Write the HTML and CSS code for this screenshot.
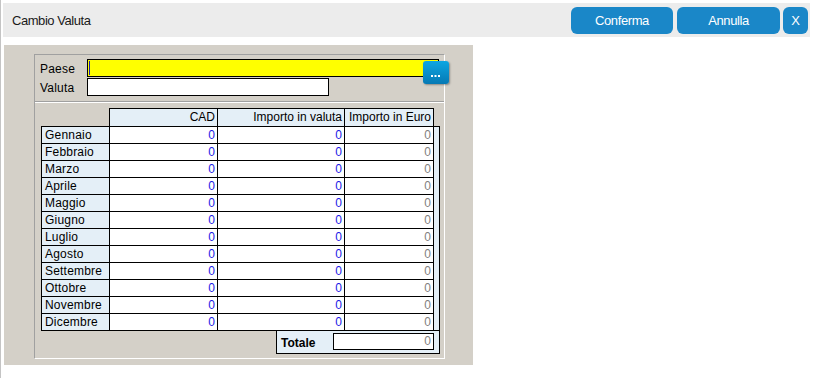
FILE: index.html
```html
<!DOCTYPE html>
<html lang="it">
<head>
<meta charset="utf-8">
<title>Cambio Valuta</title>
<link rel="stylesheet" href="styles.css">
</head>
<body>
<div class="dialog">
  <div class="topbar">
    <div class="title">Cambio Valuta</div>
    <div class="actions">
      <button class="btn btn-confirm">Conferma</button>
      <button class="btn btn-cancel">Annulla</button>
      <button class="btn btn-close">X</button>
    </div>
  </div>

  <div class="panel">
    <div class="groupbox">
      <div class="form-section">
        <div class="form-row">
          <span class="form-label">Paese</span>
          <span class="field field-paese"><span class="caret"></span></span>
        </div>
        <div class="form-row">
          <span class="form-label">Valuta</span>
          <span class="field field-valuta"></span>
        </div>
        <div class="lookup-btn">
          <svg width="26" height="23" viewBox="0 0 26 23">
            <rect x="8" y="14" width="2" height="2" fill="#ffffff"/>
            <rect x="11.5" y="14" width="2" height="2" fill="#ffffff"/>
            <rect x="15" y="14" width="2" height="2" fill="#ffffff"/>
          </svg>
        </div>
      </div>
      <div class="separator"></div>
      <div class="table-section">
        <div class="grid-head">
          <div class="head-spacer"></div>
          <div class="hcell hc-cad">CAD</div>
          <div class="hcell hc-val">Importo in valuta</div>
          <div class="hcell hc-eur">Importo in Euro</div>
        </div>
        <div class="grid-body">
          <div class="rows">
            <div class="row"><div class="c c-month">Gennaio</div><div class="c c-cad">0</div><div class="c c-val">0</div><div class="c c-eur">0</div></div>
            <div class="row"><div class="c c-month">Febbraio</div><div class="c c-cad">0</div><div class="c c-val">0</div><div class="c c-eur">0</div></div>
            <div class="row"><div class="c c-month">Marzo</div><div class="c c-cad">0</div><div class="c c-val">0</div><div class="c c-eur">0</div></div>
            <div class="row"><div class="c c-month">Aprile</div><div class="c c-cad">0</div><div class="c c-val">0</div><div class="c c-eur">0</div></div>
            <div class="row"><div class="c c-month">Maggio</div><div class="c c-cad">0</div><div class="c c-val">0</div><div class="c c-eur">0</div></div>
            <div class="row"><div class="c c-month">Giugno</div><div class="c c-cad">0</div><div class="c c-val">0</div><div class="c c-eur">0</div></div>
            <div class="row"><div class="c c-month">Luglio</div><div class="c c-cad">0</div><div class="c c-val">0</div><div class="c c-eur">0</div></div>
            <div class="row"><div class="c c-month">Agosto</div><div class="c c-cad">0</div><div class="c c-val">0</div><div class="c c-eur">0</div></div>
            <div class="row"><div class="c c-month">Settembre</div><div class="c c-cad">0</div><div class="c c-val">0</div><div class="c c-eur">0</div></div>
            <div class="row"><div class="c c-month">Ottobre</div><div class="c c-cad">0</div><div class="c c-val">0</div><div class="c c-eur">0</div></div>
            <div class="row"><div class="c c-month">Novembre</div><div class="c c-cad">0</div><div class="c c-val">0</div><div class="c c-eur">0</div></div>
            <div class="row"><div class="c c-month">Dicembre</div><div class="c c-cad">0</div><div class="c c-val">0</div><div class="c c-eur">0</div></div>
          </div>
          <div class="strip"></div>
        </div>
        <div class="total">
          <span class="total-label">Totale</span>
          <span class="total-field">0</span>
        </div>
      </div>
    </div>
  </div>
</div>
</body>
</html>
```

FILE: styles.css
```css
html, body {
  margin: 0;
  padding: 0;
  background: #ffffff;
}

body {
  font-family: "Liberation Sans", Arial, sans-serif;
  font-size: 12px;
  color: #000000;
}

.dialog {
  box-sizing: border-box;
  width: 814px;
  height: 378px;
  border-left: 1px solid #c4c4c4;
  padding-top: 3px;
}

.topbar {
  box-sizing: border-box;
  margin-left: 2px;
  width: 807px;
  height: 34px;
  background: #ececec;
  display: flex;
  align-items: center;
  padding-left: 9px;
  padding-right: 2px;
}

.title {
  font-size: 13px;
  letter-spacing: -0.45px;
  color: #1a1a1a;
  padding-top: 1px;
}

.actions {
  margin-left: auto;
  align-self: flex-start;
  margin-top: 4px;
  display: flex;
}

.btn {
  box-sizing: border-box;
  height: 27px;
  border: none;
  border-radius: 6px;
  background: #1a87c8;
  color: #ffffff;
  font-family: "Liberation Sans", Arial, sans-serif;
  font-size: 13px;
  letter-spacing: -0.4px;
  padding: 0;
  margin: 0;
}

.btn-confirm { width: 102px; }
.btn-cancel { width: 103px; margin-left: 4px; }
.btn-close { width: 25px; margin-left: 3px; }

.panel {
  box-sizing: border-box;
  margin-top: 8px;
  margin-left: 3px;
  width: 469px;
  height: 320px;
  background: #d4d0c8;
  padding-top: 9px;
  padding-left: 30px;
}

.groupbox {
  box-sizing: border-box;
  position: relative;
  width: 411px;
  border-top: 1px solid #a0a0a0;
  border-left: 1px solid #a0a0a0;
  border-right: 1px solid #ffffff;
  border-bottom: 1px solid #ffffff;
  padding-bottom: 4px;
}

.form-section {
  padding-top: 4px;
  padding-bottom: 5px;
}

.form-row {
  display: flex;
  align-items: center;
  height: 18px;
}

.form-row + .form-row {
  margin-top: 1px;
}

.form-label {
  box-sizing: border-box;
  width: 52px;
  padding-left: 5px;
  padding-top: 2px;
  letter-spacing: 0.2px;
}

.field {
  box-sizing: border-box;
  display: flex;
  align-items: center;
  height: 18px;
  border: 1px solid #000000;
  background: #ffffff;
}

.field-paese {
  width: 352px;
  background: #ffff00;
}

.field-valuta {
  width: 242px;
}

.caret {
  display: block;
  width: 1px;
  height: 14px;
  margin-left: 1px;
  background: #1c1cb0;
}

.lookup-btn {
  position: absolute;
  left: 388px;
  top: 6px;
  width: 26px;
  height: 23px;
  border-radius: 3px;
  background: linear-gradient(#0ea6e2, #0679b4);
  box-shadow: 1px 1px 2px rgba(0, 0, 0, 0.35);
}

.lookup-btn svg {
  display: block;
}

.separator {
  height: 0;
  border-top: 1px solid #a0a0a0;
  border-bottom: 1px solid #ffffff;
}

.table-section {
  padding-top: 5px;
  padding-left: 6px;
}

.grid-head {
  display: flex;
  height: 18px;
}

.head-spacer {
  width: 68px;
}

.hcell {
  box-sizing: border-box;
  height: 18px;
  border-top: 1px solid #000000;
  border-right: 1px solid #000000;
  background: #e4eff7;
  text-align: right;
  padding-right: 2px;
  line-height: 17px;
}

.hc-cad { width: 109px; border-left: 1px solid #000000; }
.hc-val { width: 127px; }
.hc-eur { width: 89px; }

.grid-body {
  box-sizing: border-box;
  display: flex;
  width: 399px;
  border: 1px solid #000000;
}

.rows {
  width: 392px;
}

.row {
  display: flex;
  height: 17px;
  box-sizing: border-box;
  border-bottom: 1px solid #000000;
}

.row:last-child {
  height: 16px;
  border-bottom: none;
}

.c {
  box-sizing: border-box;
  border-right: 1px solid #000000;
  line-height: 16px;
  background: #ffffff;
}

.c-month {
  width: 68px;
  background: #e4eff7;
  padding-left: 3px;
  letter-spacing: 0.2px;
}

.c-cad, .c-val, .c-eur {
  text-align: right;
  padding-right: 2px;
}

.c-cad { width: 108px; color: #1a1ae6; }
.c-val { width: 127px; color: #1a1ae6; }
.c-eur { width: 89px; color: #7f7f7f; }

.strip {
  width: 5px;
  background: #e4eff7;
}

.total {
  box-sizing: border-box;
  display: flex;
  align-items: flex-start;
  margin-left: 235px;
  width: 164px;
  height: 23px;
  border-left: 1px solid #000000;
  border-right: 1px solid #000000;
  border-bottom: 1px solid #000000;
  background: #e4eff7;
  padding-left: 4px;
}

.total-label {
  font-weight: bold;
  line-height: 22px;
  padding-top: 1px;
}

.total-field {
  box-sizing: border-box;
  margin-left: auto;
  margin-right: 5px;
  margin-top: 2px;
  width: 101px;
  height: 17px;
  border: 1px solid #000000;
  background: #ffffff;
  color: #7f7f7f;
  text-align: right;
  padding-right: 2px;
  line-height: 15px;
}
```
